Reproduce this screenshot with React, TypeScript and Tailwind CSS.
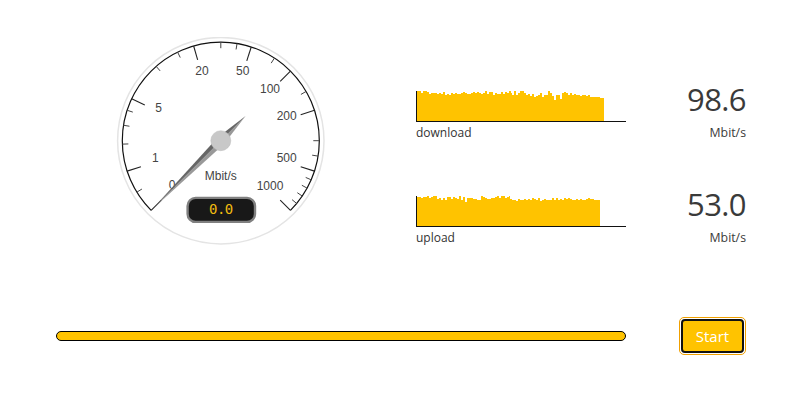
import React from "react";

const CX = 105.8;
const CY = 103.7;

const majors = [-135, -108, -64.8, -16, 18, 45, 72, 108, 135];
const minors = [-121.5, -92, -81, -72, -41, -26, 0, 9.5, 33, 60, 90, 99, 113.4, 118.8, 124.2, 129.6];

const labels: [string, number, number][] = [
  ["0", 172, 185],
  ["1", 155.3, 157.7],
  ["5", 158.7, 108],
  ["20", 202, 70.3],
  ["50", 242.7, 71],
  ["100", 270, 88.6],
  ["200", 286.7, 116],
  ["500", 286.7, 158],
  ["1000", 270, 185.7],
];

const polar = (deg: number, r: number) => {
  const a = (deg * Math.PI) / 180;
  return [CX + r * Math.sin(a), CY - r * Math.cos(a)];
};

const Gauge = () => {
  const [sx, sy] = polar(-135, 98.5);
  const [ex, ey] = polar(135, 98.5);
  return (
    <svg width="212" height="212" viewBox="0 0 212 212" className="block">
      <circle cx={CX} cy={CY} r="103.2" fill="white" stroke="#e4e4e4" strokeWidth="1.5" />
      <path d={`M${sx} ${sy}A98.5 98.5 0 1 1 ${ex} ${ey}`} fill="none" stroke="#111" strokeWidth="1.2" />
      {majors.map((d) => {
        const [x1, y1] = polar(d, 98.5);
        const [x2, y2] = polar(d, 84);
        return <line key={d} x1={x1} y1={y1} x2={x2} y2={y2} stroke="#222" strokeWidth="1.1" />;
      })}
      {minors.map((d) => {
        const [x1, y1] = polar(d, 98.5);
        const [x2, y2] = polar(d, 92.5);
        return <line key={d} x1={x1} y1={y1} x2={x2} y2={y2} stroke="#444" strokeWidth="1" />;
      })}
      {labels.map(([t, x, y]) => (
        <text
          key={t}
          x={x - 115}
          y={y - 37 + 4.2}
          textAnchor="middle"
          fontSize="12"
          fill="#444"
          fontFamily="'Liberation Sans', sans-serif"
        >
          {t}
        </text>
      ))}
      <text
        x={CX}
        y={143.2}
        textAnchor="middle"
        fontSize="12"
        fill="#444"
        fontFamily="'Liberation Sans', sans-serif"
      >
        Mbit/s
      </text>
      {/* needle points at 0, short end sticks out past the hub */}
      <g transform={`rotate(-135 ${CX} ${CY})`}>
        <polygon points={`${CX},${CY - 98} ${CX - 4.5},${CY} ${CX},${CY + 35}`} fill="#999" />
        <polygon points={`${CX},${CY - 98} ${CX + 4.5},${CY} ${CX},${CY + 35}`} fill="#666" />
      </g>
      <circle cx={CX} cy={CY} r="10" fill="#c8c8c8" stroke="#bbb" strokeWidth="0.5" />
      <rect x="72.6" y="160.9" width="67.4" height="24" rx="8" fill="#181818" stroke="#808080" strokeWidth="2.4" />
      <text
        x={CX}
        y={176.8}
        textAnchor="middle"
        fontSize="14"
        fill="#f0bc10"
        letterSpacing="-0.6"
        fontFamily="'DejaVu Sans Mono', monospace"
      >
        0.0
      </text>
    </svg>
  );
};

const downloadTops = [
  33, 33, 38, 34, 33, 37, 42, 40, 40, 40, 43, 38, 42, 36, 44, 42, 44, 40, 43, 40, 43, 43, 40, 36, 40, 42, 43, 40, 37, 40, 36, 39,
  42, 40, 34, 42, 36, 36, 44, 40, 43, 42, 37, 42, 36, 40, 33, 38, 44, 34, 44, 40, 33, 33, 38, 46, 42, 47, 42, 50, 48, 44, 40, 52,
  44, 46, 33, 38, 48, 60, 44, 44, 56, 40, 36, 40, 44, 40, 46, 42, 44, 44, 48, 44, 46, 47, 46, 50, 51, 52, 52, 52, 53, 53,
];

const uploadTops = [
  36, 36, 38, 35, 37, 34, 40, 36, 33, 33, 42, 38, 46, 38, 46, 36, 36, 42, 36, 38, 42, 33, 44, 36, 50, 40, 38, 38, 42, 42, 44, 44,
  33, 36, 38, 42, 42, 40, 38, 36, 34, 40, 34, 34, 38, 36, 34, 42, 44, 46, 48, 42, 44, 44, 42, 46, 42, 44, 40, 42, 44, 40, 47, 44,
  42, 46, 44, 44, 40, 46, 38, 44, 42, 44, 40, 42, 40, 42, 44, 44, 42, 44, 42, 44, 44, 42, 40, 42, 43, 44, 44, 44,
];

const Chart = ({ tops, right }: { tops: number[]; right: number }) => {
  const step = right / tops.length;
  let d = `M1 30`;
  tops.forEach((t, i) => {
    const y = Math.round((t - 33) / 3);
    d += `V${y}H${1 + (i + 1) * step}`;
  });
  d += "V30Z";
  return (
    <svg width="210" height="31" viewBox="0 0 210 31" className="block" shapeRendering="crispEdges">
      <path d={d} fill="#ffc300" />
      <path d="M0.5 0V31M0 30.5H210" fill="none" stroke="#111" strokeWidth="1" />
    </svg>
  );
};

const Meter = ({ name, value, tops, right }: { name: string; value: string; tops: number[]; right: number }) => (
  <div className="flex h-[75px]">
    <div className="w-[210px]">
      <Chart tops={tops} right={right} />
      <div className="mt-[1px] text-[12px] leading-[20px] text-[#333]">{name}</div>
    </div>
    <div className="flex-1 text-right text-[#3a3a3a]">
      <div className="mt-[-13px] h-[45px] text-[31px] leading-[43px] tracking-[-0.6px]">{value}</div>
      <div className="text-[12.3px] leading-[20px]">Mbit/s</div>
    </div>
  </div>
);

const App = () => {
  return (
    <div className="h-[402px] w-[800px] bg-white pl-[56px] pr-[54px] pt-[37px] font-['Open_Sans',sans-serif]">
      <div className="flex h-[280px]">
        <div className="flex w-[330px] justify-center">
          <Gauge />
        </div>
        <div className="ml-[30px] flex flex-1 flex-col gap-[30px] pt-[54px]">
          <Meter name="download" value="98.6" tops={downloadTops} right={187} />
          <Meter name="upload" value="53.0" tops={uploadTops} right={183} />
        </div>
      </div>
      <div className="flex items-center justify-between">
        <div className="h-[10px] w-[570px] rounded-[5px] border border-black bg-[#ffc300]" />
        <div className="rounded-[5px] border border-[#f0a000] p-[1px]">
          <button className="flex h-[34px] w-[63px] items-center justify-center rounded-[4px] border-2 border-[#111] bg-[#ffc300] text-[15px] text-white">
            Start
          </button>
        </div>
      </div>
    </div>
  );
};

export default App;
